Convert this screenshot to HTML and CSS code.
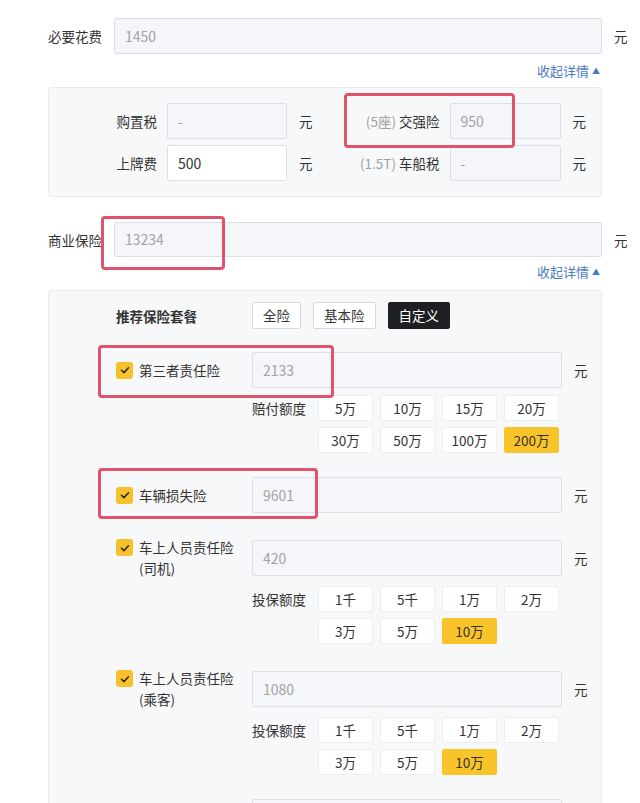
FILE: index.html
```html
<!DOCTYPE html>
<html lang="zh">
<head>
<meta charset="utf-8">
<title>费用明细</title>
<link rel="stylesheet" href="styles.css">
</head>
<body>
<div class="page">
  <div class="field">
    <span class="field-label">必要花费</span>
    <div class="input wide">1450</div>
    <span class="unit">元</span>
  </div>
  <div class="toggle"><span>收起详情</span><span class="tri">▲</span></div>

  <div class="panel panel-tax">
    <div class="tax-row">
      <div class="tax-half">
        <span class="tax-label left">购置税</span>
        <div class="input small">-</div>
        <span class="unit">元</span>
      </div>
      <div class="tax-half">
        <span class="tax-label right"><span class="muted">(5座)</span> 交强险</span>
        <div class="input small2">950</div>
        <span class="unit">元</span>
      </div>
    </div>
    <div class="tax-row">
      <div class="tax-half">
        <span class="tax-label left">上牌费</span>
        <div class="input small white">500</div>
        <span class="unit">元</span>
      </div>
      <div class="tax-half">
        <span class="tax-label right"><span class="muted">(1.5T)</span> 车船税</span>
        <div class="input small2">-</div>
        <span class="unit">元</span>
      </div>
    </div>
  </div>

  <div class="field field-biz">
    <span class="field-label">商业保险</span>
    <div class="input wide">13234</div>
    <span class="unit">元</span>
  </div>
  <div class="toggle toggle-biz"><span>收起详情</span><span class="tri">▲</span></div>

  <div class="panel panel-ins">
    <div class="pkg-row">
      <span class="pkg-label">推荐保险套餐</span>
      <div class="pkg-btns">
        <span class="pkg-btn">全险</span>
        <span class="pkg-btn">基本险</span>
        <span class="pkg-btn active">自定义</span>
      </div>
    </div>

    <div class="item">
      <div class="item-head">
        <div class="item-name"><span class="check"><svg viewBox="0 0 16 16" width="16" height="16"><path d="M4.5 8.2l2.4 2.4 4.6-4.8" fill="none" stroke="#3a2a00" stroke-width="1.6" stroke-linecap="round" stroke-linejoin="round"/></svg></span><span class="item-text">第三者责任险</span></div>
        <div class="input item-input">2133</div>
        <span class="unit">元</span>
      </div>
      <div class="opts">
        <span class="opts-label">赔付额度</span>
        <div class="opts-grid">
          <span class="opt">5万</span><span class="opt">10万</span><span class="opt">15万</span><span class="opt">20万</span>
          <span class="opt">30万</span><span class="opt">50万</span><span class="opt">100万</span><span class="opt on">200万</span>
        </div>
      </div>
    </div>

    <div class="item">
      <div class="item-head">
        <div class="item-name"><span class="check"><svg viewBox="0 0 16 16" width="16" height="16"><path d="M4.5 8.2l2.4 2.4 4.6-4.8" fill="none" stroke="#3a2a00" stroke-width="1.6" stroke-linecap="round" stroke-linejoin="round"/></svg></span><span class="item-text">车辆损失险</span></div>
        <div class="input item-input">9601</div>
        <span class="unit">元</span>
      </div>
    </div>

    <div class="item">
      <div class="item-head">
        <div class="item-name"><span class="check"><svg viewBox="0 0 16 16" width="16" height="16"><path d="M4.5 8.2l2.4 2.4 4.6-4.8" fill="none" stroke="#3a2a00" stroke-width="1.6" stroke-linecap="round" stroke-linejoin="round"/></svg></span><span class="item-text">车上人员责任险<br>(司机)</span></div>
        <div class="input item-input">420</div>
        <span class="unit">元</span>
      </div>
      <div class="opts">
        <span class="opts-label">投保额度</span>
        <div class="opts-grid">
          <span class="opt">1千</span><span class="opt">5千</span><span class="opt">1万</span><span class="opt">2万</span>
          <span class="opt">3万</span><span class="opt">5万</span><span class="opt on">10万</span>
        </div>
      </div>
    </div>

    <div class="item">
      <div class="item-head">
        <div class="item-name"><span class="check"><svg viewBox="0 0 16 16" width="16" height="16"><path d="M4.5 8.2l2.4 2.4 4.6-4.8" fill="none" stroke="#3a2a00" stroke-width="1.6" stroke-linecap="round" stroke-linejoin="round"/></svg></span><span class="item-text">车上人员责任险<br>(乘客)</span></div>
        <div class="input item-input">1080</div>
        <span class="unit">元</span>
      </div>
      <div class="opts">
        <span class="opts-label">投保额度</span>
        <div class="opts-grid">
          <span class="opt">1千</span><span class="opt">5千</span><span class="opt">1万</span><span class="opt">2万</span>
          <span class="opt">3万</span><span class="opt">5万</span><span class="opt on">10万</span>
        </div>
      </div>
    </div>

    <div class="item">
      <div class="item-head">
        <div class="item-name"></div>
        <div class="input item-input"></div>
      </div>
    </div>
  </div>

  <div class="mark mark-1"></div>
  <div class="mark mark-2"></div>
  <div class="mark mark-3"></div>
  <div class="mark mark-4"></div>
</div>
</body>
</html>
```

FILE: styles.css
```css
* { box-sizing: border-box; }
html, body { margin: 0; padding: 0; background: #fff; }
body {
  font-family: "Noto Sans CJK SC", "Noto Sans", sans-serif;
  font-size: 13.5px;
  color: #333;
  overflow: hidden;
  height: 803px;
}
.page {
  position: relative;
  padding: 18px 0 0 48px;
  width: 640px;
}
.field { display: flex; align-items: center; }
.field-label { width: 66px; white-space: nowrap; }
.input {
  height: 36px;
  border: 1px solid #dcdfe5;
  background: #f5f6f9;
  border-radius: 2px;
  color: #a3a3a3;
  font-size: 14px;
  line-height: 34px;
  padding-left: 10px;
  white-space: nowrap;
}
.input.white { background: #fff; color: #333; }
.input.wide { width: 488px; }
.unit { margin-left: 12px; color: #333; }

.toggle {
  width: 554px;
  text-align: right;
  color: #4a7cc3;
  font-size: 13px;
  line-height: 18px;
  margin-top: 8px;
  padding-right: 2px;
}
.toggle .tri { font-size: 8px; margin-left: 3px; vertical-align: 2px; }

.panel {
  width: 554px;
  border: 1px solid #e9ebef;
  background: #f7f8fa;
  border-radius: 3px;
}
.panel-tax {
  margin-top: 7px;
  padding: 15px 0 15px 0;
  display: flex;
  flex-direction: column;
  gap: 6px;
}
.tax-row { display: flex; }
.tax-half { display: flex; align-items: center; }
.tax-label { text-align: right; margin-right: 10px; white-space: nowrap; }
.tax-label.left { width: 108px; }
.tax-label.right { width: 127px; }
.muted { color: #a0a0a0; }
.input.small { width: 120px; }
.input.small2 { width: 111px; }

.field-biz { margin-top: 25px; }
.field-biz .input { height: 35px; line-height: 33px; }
.toggle-biz { margin-top: 6px; }

.panel-ins {
  margin-top: 9px;
  padding: 11px 0 0 67px;
  height: 600px;
}
.pkg-row { display: flex; align-items: center; }
.pkg-label { width: 136px; font-weight: 600; font-size: 13.5px; }
.pkg-btns { display: flex; gap: 12px; }
.pkg-btn {
  height: 27px;
  line-height: 25px;
  padding: 0 10px;
  border: 1px solid #d6d8dc;
  background: #fff;
  border-radius: 2px;
  font-size: 13.5px;
}
.pkg-btn.active { background: #1e1f22; border-color: #1e1f22; color: #fff; }

.item { margin-top: 24px; }
.pkg-row + .item { margin-top: 23px; }
.item-head { display: flex; align-items: center; }
.item-name { width: 136px; display: flex; align-items: flex-start; }
.check {
  width: 17px;
  height: 17px;
  border-radius: 3px;
  background: #f6c12c;
  display: flex;
  align-items: center;
  justify-content: center;
  margin-top: 2px;
  flex: none;
}
.item-text { margin-left: 6px; line-height: 21px; font-size: 13.5px; }
.input.item-input { width: 310px; }

.opts { display: flex; align-items: flex-start; margin-top: 7px; padding-left: 136px; }
.opts-label { width: 66px; line-height: 26px; font-size: 13.5px; }
.opts-grid {
  display: grid;
  grid-template-columns: repeat(4, 55px);
  column-gap: 7px;
  row-gap: 6px;
}
.opt {
  height: 26px;
  line-height: 24px;
  text-align: center;
  background: #fff;
  border: 1px solid #eceef1;
  border-radius: 2px;
  font-size: 13.5px;
}
.opt.on { background: #f8c42a; border-color: #f8c42a; }

.mark {
  position: absolute;
  border: 3px solid #e0536a;
  border-radius: 4px;
}
.mark-1 { left: 344px; top: 93px; width: 171px; height: 55px; }
.mark-2 { left: 101px; top: 216px; width: 124px; height: 54px; }
.mark-3 { left: 98px; top: 345px; width: 236px; height: 53px; }
.mark-4 { left: 98px; top: 468px; width: 220px; height: 51px; }
```
